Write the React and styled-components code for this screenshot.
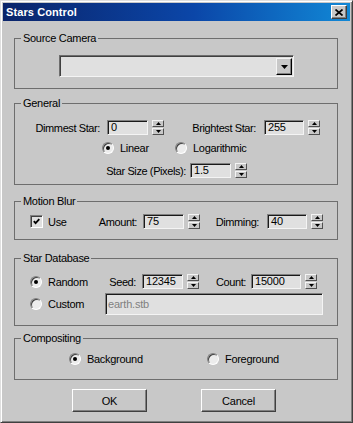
import React from 'react';
import styled, { createGlobalStyle } from 'styled-components';

const GlobalStyle = createGlobalStyle`
  html, body {
    margin: 0;
    padding: 0;
    background: #c8c8c8;
  }
  body {
    font-family: "Liberation Sans", Arial, sans-serif;
    font-size: 11px;
    color: #000;
  }
`;

const Window = styled.div`
  width: 353px;
  height: 423px;
  box-sizing: border-box;
  background: #c8c8c8;
  border: 1px solid;
  border-color: #dfdfdf #404040 #404040 #dfdfdf;
  box-shadow: inset 1px 1px 0 #fff, inset -1px -1px 0 #808080;
  padding: 2px;
  display: flex;
  flex-direction: column;
`;

const TitleBar = styled.div`
  height: 18px;
  flex: none;
  display: flex;
  align-items: center;
  justify-content: space-between;
  padding: 0 3px;
  background: linear-gradient(to right, #0a246a 0%, #0b46a8 55%, #1188d6 100%);
`;

const Title = styled.span`
  color: #fff;
  font-weight: bold;
  font-size: 11px;
  letter-spacing: 0.1px;
`;

const CloseBtn = styled.div`
  width: 16px;
  height: 14px;
  box-sizing: border-box;
  background: #c8c8c8;
  border: 1px solid;
  border-color: #fff #404040 #404040 #fff;
  box-shadow: inset -1px -1px 0 #808080;
  display: flex;
  align-items: center;
  justify-content: center;
`;

const Body = styled.div`
  padding: 0 12px 0 11px;
  display: flex;
  flex-direction: column;
`;

const Group = styled.fieldset`
  margin: ${p => p.$mt}px 0 0;
  padding: ${p => p.$pt}px 0 ${p => p.$pb}px;
  width: 324px;
  min-width: 0;
  box-sizing: border-box;
  border: 1px solid #6e6e6e;
  display: flex;
  flex-direction: column;
`;

const Legend = styled.legend`
  margin-left: 6px;
  padding: 0 2px;
  font-size: 11px;
  line-height: 13px;
  letter-spacing: -0.3px;
`;

const Row = styled.div`
  display: flex;
  align-items: center;
  height: ${p => p.$h}px;
  padding-left: ${p => p.$pl || 0}px;
  margin-top: ${p => p.$mt || 0}px;
`;

const FieldLabel = styled.span`
  width: ${p => p.$w}px;
  margin-right: ${p => p.$mr}px;
  text-align: right;
  white-space: nowrap;
  letter-spacing: -0.4px;
  flex: none;
`;

const Edit = styled.div`
  width: ${p => p.$w}px;
  height: 15px;
  box-sizing: border-box;
  border: 1px solid;
  border-color: #808080 #f4f4f4 #f4f4f4 #808080;
  box-shadow: inset 1px 1px 0 #1a1a1a;
  background: #e0e0e0;
  padding: 0 0 0 3px;
  line-height: 13px;
  color: ${p => (p.$disabled ? '#808080' : '#000')};
  letter-spacing: -0.2px;
  flex: none;
`;

const TextField = styled(Edit)`
  height: 22px;
  line-height: 20px;
  padding-left: 2px;
`;

const SpinWrap = styled.div`
  display: flex;
  align-items: center;
  gap: 4px;
  flex: none;
`;

const Spinner = styled.div`
  width: 12px;
  height: 15px;
  display: flex;
  flex-direction: column;
  gap: 1px;
`;

const SpinBtn = styled.div`
  height: 7px;
  box-sizing: border-box;
  background: #c8c8c8;
  border: 1px solid;
  border-color: #f4f4f4 #505050 #505050 #f4f4f4;
  display: flex;
  align-items: center;
  justify-content: center;
`;

const Dropdown = styled.div`
  width: 235px;
  height: 22px;
  margin-left: 44px;
  box-sizing: border-box;
  border: 1px solid;
  border-color: #6e6e6e #f4f4f4 #f4f4f4 #6e6e6e;
  box-shadow: inset 1px 1px 0 #404040;
  background: #e0e0e0;
  display: flex;
  justify-content: flex-end;
  align-items: center;
  padding-right: 1px;
`;

const DropBtn = styled.div`
  width: 16px;
  height: 17px;
  box-sizing: border-box;
  background: #c8c8c8;
  border: 1px solid;
  border-color: #f4f4f4 #000 #000 #f4f4f4;
  box-shadow: inset -1px -1px 0 #808080;
  display: flex;
  align-items: center;
  justify-content: center;
  margin-top: 1px;
`;

const OptItem = styled.label`
  width: ${p => p.$w}px;
  display: flex;
  align-items: center;
  gap: ${p => p.$gap || 6}px;
  flex: none;
  letter-spacing: -0.3px;
`;

const RadioCircle = styled.span`
  width: 12px;
  height: 12px;
  box-sizing: border-box;
  border-radius: 50%;
  border: 1px solid;
  border-color: #808080 #fff #fff #808080;
  box-shadow: inset 1px 1px 0 #404040;
  background: #ececec;
  display: flex;
  align-items: center;
  justify-content: center;
  flex: none;

  &::after {
    content: '';
    width: 4px;
    height: 4px;
    border-radius: 50%;
    background: ${p => (p.$on ? '#000' : 'transparent')};
  }
`;

const CheckBox = styled.span`
  width: 13px;
  height: 13px;
  box-sizing: border-box;
  border: 1px solid;
  border-color: #808080 #fff #fff #808080;
  box-shadow: inset 1px 1px 0 #404040;
  background: #e0e0e0;
  display: flex;
  align-items: center;
  justify-content: center;
  flex: none;
`;

const ButtonRow = styled.div`
  display: flex;
  gap: 54px;
  padding-left: 58px;
  margin-top: 9px;
`;

const PushButton = styled.button`
  width: 75px;
  height: 23px;
  padding: 0;
  box-sizing: border-box;
  background: #c8c8c8;
  border: 1px solid;
  border-color: #fff #404040 #404040 #fff;
  box-shadow: inset -1px -1px 0 #808080;
  font-family: "Liberation Sans", Arial, sans-serif;
  font-size: 11px;
  color: #000;
  letter-spacing: -0.2px;
`;

const UpArrow = () => (
  <svg width="5" height="3" viewBox="0 0 5 3">
    <polygon points="0,3 5,3 2.5,0" fill="#000" />
  </svg>
);

const DownArrow = () => (
  <svg width="5" height="3" viewBox="0 0 5 3">
    <polygon points="0,0 5,0 2.5,3" fill="#000" />
  </svg>
);

const SpinBox = ({ value, w = 41 }) => (
  <SpinWrap>
    <Edit $w={w}>{value}</Edit>
    <Spinner>
      <SpinBtn><UpArrow /></SpinBtn>
      <SpinBtn><DownArrow /></SpinBtn>
    </Spinner>
  </SpinWrap>
);

const Radio = ({ on, w, children }) => (
  <OptItem $w={w}>
    <RadioCircle $on={on} />
    <span>{children}</span>
  </OptItem>
);

const App = () => {
  return (
    <>
      <GlobalStyle />
      <Window>
        <TitleBar>
          <Title>Stars Control</Title>
          <CloseBtn>
            <svg width="8" height="7" viewBox="0 0 8 7">
              <path d="M0.5 0.5L7.5 6.5M7.5 0.5L0.5 6.5" stroke="#000" strokeWidth="1.7" />
            </svg>
          </CloseBtn>
        </TitleBar>

        <Body>
          <Group $mt={11} $pt={10} $pb={11}>
            <Legend>Source Camera</Legend>
            <Dropdown>
              <DropBtn>
                <svg width="7" height="4" viewBox="0 0 7 4">
                  <polygon points="0,0 7,0 3.5,4" fill="#000" />
                </svg>
              </DropBtn>
            </Dropdown>
          </Group>

          <Group $mt={8} $pt={10} $pb={6}>
            <Legend>General</Legend>
            <Row $h={15}>
              <FieldLabel $w={85} $mr={7}>Dimmest Star:</FieldLabel>
              <SpinBox value="0" />
              <FieldLabel $w={92} $mr={8}>Brightest Star:</FieldLabel>
              <SpinBox value="255" w={40} />
            </Row>
            <Row $h={14} $mt={6} $pl={87}>
              <Radio on w={73}>Linear</Radio>
              <Radio w={90}>Logarithmic</Radio>
            </Row>
            <Row $h={15} $mt={8}>
              <FieldLabel $w={171} $mr={4}>Star Size (Pixels):</FieldLabel>
              <SpinBox value="1.5" />
            </Row>
          </Group>

          <Group $mt={10} $pt={6} $pb={10}>
            <Legend>Motion Blur</Legend>
            <Row $h={15} $pl={15}>
              <OptItem $w={52} $gap={5}>
                <CheckBox>
                  <svg width="7" height="7" viewBox="0 0 7 7">
                    <polyline points="0.8,3.2 2.6,5.2 6.3,1.2" fill="none" stroke="#000" strokeWidth="1.8" />
                  </svg>
                </CheckBox>
                <span>Use</span>
              </OptItem>
              <FieldLabel $w={55} $mr={6}>Amount:</FieldLabel>
              <SpinBox value="75" />
              <FieldLabel $w={59} $mr={8}>Dimming:</FieldLabel>
              <SpinBox value="40" w={40} />
            </Row>
          </Group>

          <Group $mt={12} $pt={9} $pb={10}>
            <Legend>Star Database</Legend>
            <Row $h={15} $pl={15}>
              <Radio on w={57}>Random</Radio>
              <FieldLabel $w={49} $mr={6}>Seed:</FieldLabel>
              <SpinBox value="12345" />
              <FieldLabel $w={47} $mr={5}>Count:</FieldLabel>
              <SpinBox value="15000" w={50} />
            </Row>
            <Row $h={22} $mt={4} $pl={15}>
              <Radio w={75}>Custom</Radio>
              <TextField $w={218} $disabled>earth.stb</TextField>
            </Row>
          </Group>

          <Group $mt={6} $pt={7} $pb={13}>
            <Legend>Compositing</Legend>
            <Row $h={14} $pl={54}>
              <Radio on w={138}>Background</Radio>
              <Radio w={90}>Foreground</Radio>
            </Row>
          </Group>

          <ButtonRow>
            <PushButton>OK</PushButton>
            <PushButton>Cancel</PushButton>
          </ButtonRow>
        </Body>
      </Window>
    </>
  );
};

export default App;
